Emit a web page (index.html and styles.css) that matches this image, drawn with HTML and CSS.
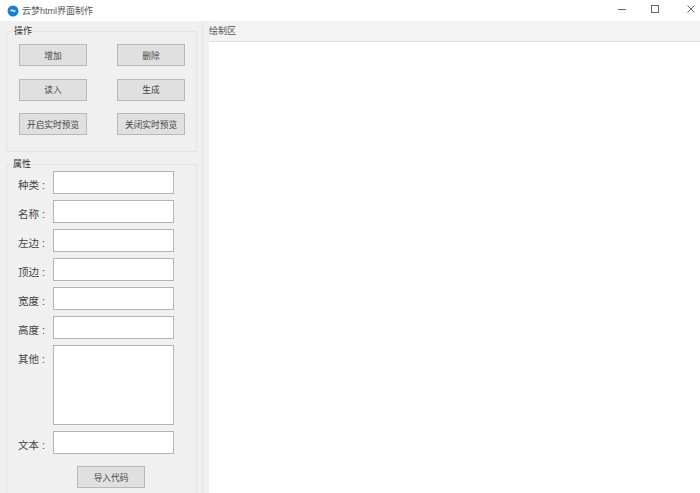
FILE: index.html
```html
<!doctype html>
<html lang="zh-CN">
<head>
    <meta charset="UTF-8">
    <title>云梦html界面制作</title>
    <link rel="stylesheet" href="styles.css">
</head>
<body>
    <div class="titlebar">
        <svg class="app-icon" width="12" height="12" viewBox="0 0 12 12">
            <circle cx="6" cy="6" r="5.5" fill="#1c7fd6"/>
            <path d="M3.6 6.2 C4.6 4.9 5.6 4.9 6.2 5.8 C6.8 6.6 7.6 6.4 8.4 5.4" fill="none" stroke="#fff" stroke-width="1.3"/>
        </svg>
        <span class="title">云梦html界面制作</span>
        <div class="win-btns">
            <svg width="8" height="8" viewBox="0 0 8 8"><path d="M0 4.5H8" stroke="#666" fill="none"/></svg>
            <svg width="8" height="8" viewBox="0 0 8 8"><rect x="0.5" y="0.5" width="7" height="7" stroke="#666" fill="none"/></svg>
            <svg class="win-close" width="8" height="8" viewBox="0 0 8 8"><path d="M0.5 0.5L7.5 7.5M7.5 0.5L0.5 7.5" stroke="#666" fill="none"/></svg>
        </div>
    </div>
    <div class="main">
        <div class="side">
            <fieldset class="group ops">
                <legend>操作</legend>
                <div class="btn-grid">
                    <button class="btn">增加</button>
                    <button class="btn">删除</button>
                    <button class="btn">读入</button>
                    <button class="btn">生成</button>
                    <button class="btn">开启实时预览</button>
                    <button class="btn">关闭实时预览</button>
                </div>
            </fieldset>
            <fieldset class="group props">
                <legend>属性</legend>
                <div class="row"><label>种类 :</label><input type="text"></div>
                <div class="row"><label>名称 :</label><input type="text"></div>
                <div class="row"><label>左边 :</label><input type="text"></div>
                <div class="row"><label>顶边 :</label><input type="text"></div>
                <div class="row"><label>宽度 :</label><input type="text"></div>
                <div class="row"><label>高度 :</label><input type="text"></div>
                <div class="row"><label>其他 :</label><textarea></textarea></div>
                <div class="row"><label>文本 :</label><input type="text"></div>
                <button class="btn import">导入代码</button>
            </fieldset>
        </div>
        <div class="draw">
            <div class="draw-label">绘制区</div>
            <div class="canvas"></div>
        </div>
    </div>
</body>
</html>
```
FILE: styles.css
```css
*{
    margin: 0;
    padding: 0;
    box-sizing: border-box;
}
html,body{
    width: 700px;
    height: 493px;
    overflow: hidden;
}
body{
    background-color: #f0f0f0;
    font-family: "Liberation Sans", "Noto Sans CJK SC", sans-serif;
    font-size: 9px;
    color: #444;
}
.titlebar{
    height: 21px;
    background-color: #fff;
    display: flex;
    align-items: center;
    padding-left: 7px;
}
.app-icon{
    margin-right: 3px;
}
.title{
    color: #555;
    line-height: 16px;
}
.win-btns{
    margin-left: auto;
    display: flex;
    gap: 25px;
    padding-right: 5px;
    margin-top: -4px;
}
.win-close{
    margin-left: 3px;
}
.main{
    display: flex;
    height: 472px;
}
.side{
    width: 203px;
    padding-left: 6px;
    border-right: 1px solid #e6e6e6;
    flex: none;
}
.group{
    width: 191px;
    border: 1px solid #e5e5e5;
    padding-left: 12px;
}
.group legend{
    margin-left: -5px;
    font-size: 9px;
    line-height: 12px;
    color: #333;
}
.ops{
    margin-top: 4px;
    height: 127px;
    padding-top: 7px;
}
.btn-grid{
    display: grid;
    grid-template-columns: 68px 68px;
    column-gap: 30px;
    grid-auto-rows: 22px;
    row-gap: 12.5px;
}
.btn{
    width: 68px;
    height: 22px;
    background-color: #e0e0e0;
    border: 1px solid #b8b8b8;
    font-family: inherit;
    font-size: 8.7px;
    color: #444;
}
.props{
    margin-top: 6px;
    height: 336px;
    padding-left: 11px;
    padding-top: 1px;
    border-bottom: none;
}
.row{
    display: flex;
    margin-bottom: 6px;
}
.row label{
    width: 35px;
    font-size: 10.5px;
    line-height: 16px;
    padding-top: 6px;
    color: #444;
    flex: none;
}
.row input,.row textarea{
    width: 121px;
    height: 23px;
    background-color: #fff;
    border: 1px solid #b4b4b4;
    resize: none;
    outline: none;
}
.row textarea{
    height: 80px;
}
.import{
    display: block;
    margin: 12px 0 0 59px;
}
.draw{
    flex: 1;
    margin-left: 6px;
    display: flex;
    flex-direction: column;
}
.draw-label{
    height: 21px;
    padding-top: 4px;
    line-height: 12px;
    color: #555;
    background-color: #f3f3f3;
    border-bottom: 1px solid #e2e2e2;
}
.canvas{
    flex: 1;
    background-color: #fff;
}
```
